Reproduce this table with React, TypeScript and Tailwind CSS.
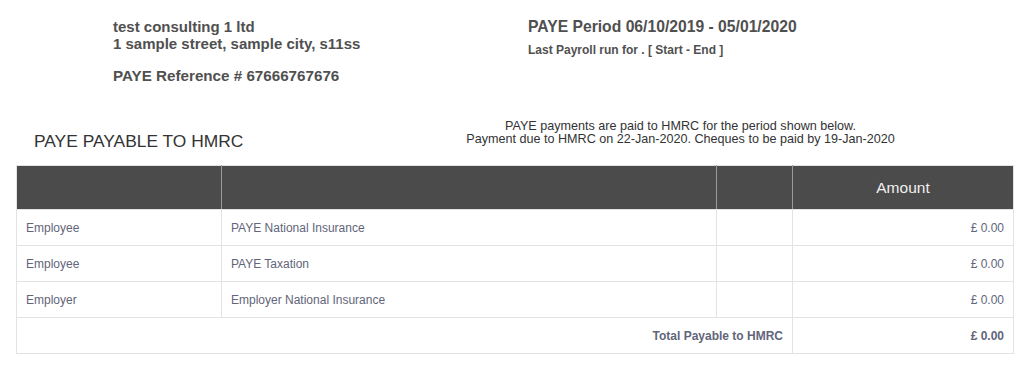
import React from 'react'

interface PayeRow {
  who: string
  item: string
  amount: string
}

const rows: PayeRow[] = [
  { who: 'Employee', item: 'PAYE National Insurance', amount: '£ 0.00' },
  { who: 'Employee', item: 'PAYE Taxation', amount: '£ 0.00' },
  { who: 'Employer', item: 'Employer National Insurance', amount: '£ 0.00' },
]

export default function App() {
  return (
    <div className="w-[1024px] h-[365px] bg-white text-[#444] font-['Liberation_Sans',Arial,sans-serif]">
      {/* company + period */}
      <div className="flex h-[120px] pt-[18px] pl-[113px]">
        <div className="w-[415px]">
          <div className="text-[15px] leading-[17px] font-bold text-[#505050]">
            <p>test consulting 1 ltd</p>
            <p>1 sample street, sample city, s11ss</p>
          </div>
          <p className="mt-[14px] text-[15.2px] leading-[20px] font-bold text-[#505050]">PAYE Reference # 67666767676</p>
        </div>
        <div>
          <p className="text-[15.7px] leading-[18px] font-bold text-[#505050]">PAYE Period 06/10/2019 - 05/01/2020</p>
          <p className="mt-[7px] text-[12px] leading-[14px] font-bold text-[#505050]">Last Payroll run for . [ Start - End ]</p>
        </div>
      </div>

      <div className="flex h-[45px] ml-[16px] w-[997px]">
        <h2 className="w-[332px] pl-[18px] pt-[11px] text-[17.4px] leading-[20px] text-[#333]">PAYE PAYABLE TO HMRC</h2>
        <div className="flex-1 text-center text-[12.6px] leading-[13px] text-[#333]">
          <p>PAYE payments are paid to HMRC for the period shown below.</p>
          <p>Payment due to HMRC on 22-Jan-2020. Cheques to be paid by 19-Jan-2020</p>
        </div>
      </div>

      <table className="ml-[16px] w-[997px] table-fixed border-collapse text-[12px] text-[#62657a]">
        <colgroup>
          <col className="w-[205px]" />
          <col className="w-[495px]" />
          <col className="w-[76px]" />
          <col className="w-[221px]" />
        </colgroup>
        <thead>
          <tr className="h-[44px] bg-[#4b4b4b]">
            <th className="border border-[#e3e3e3] border-r-[#9a9a9a]" />
            <th className="border border-[#e3e3e3] border-x-[#9a9a9a]" />
            <th className="border border-[#e3e3e3] border-x-[#9a9a9a]" />
            <th className="border border-[#e3e3e3] border-l-[#9a9a9a] text-[15.5px] font-normal text-[#f0f0f0] text-center">Amount</th>
          </tr>
        </thead>
        <tbody>
          {rows.map((r, i) => (
            <tr key={i} className="h-[36px]">
              <td className="border border-[#e3e3e3] pl-[9px]">{r.who}</td>
              <td className="border border-[#e3e3e3] pl-[9px]">{r.item}</td>
              <td className="border border-[#e3e3e3]" />
              <td className="border border-[#e3e3e3] pr-[9px] text-right">{r.amount}</td>
            </tr>
          ))}
          <tr className="h-[36px] font-bold">
            <td colSpan={3} className="border border-[#e3e3e3] pr-[9px] text-right">Total Payable to HMRC</td>
            <td className="border border-[#e3e3e3] pr-[9px] text-right">£ 0.00</td>
          </tr>
        </tbody>
      </table>
    </div>
  )
}
